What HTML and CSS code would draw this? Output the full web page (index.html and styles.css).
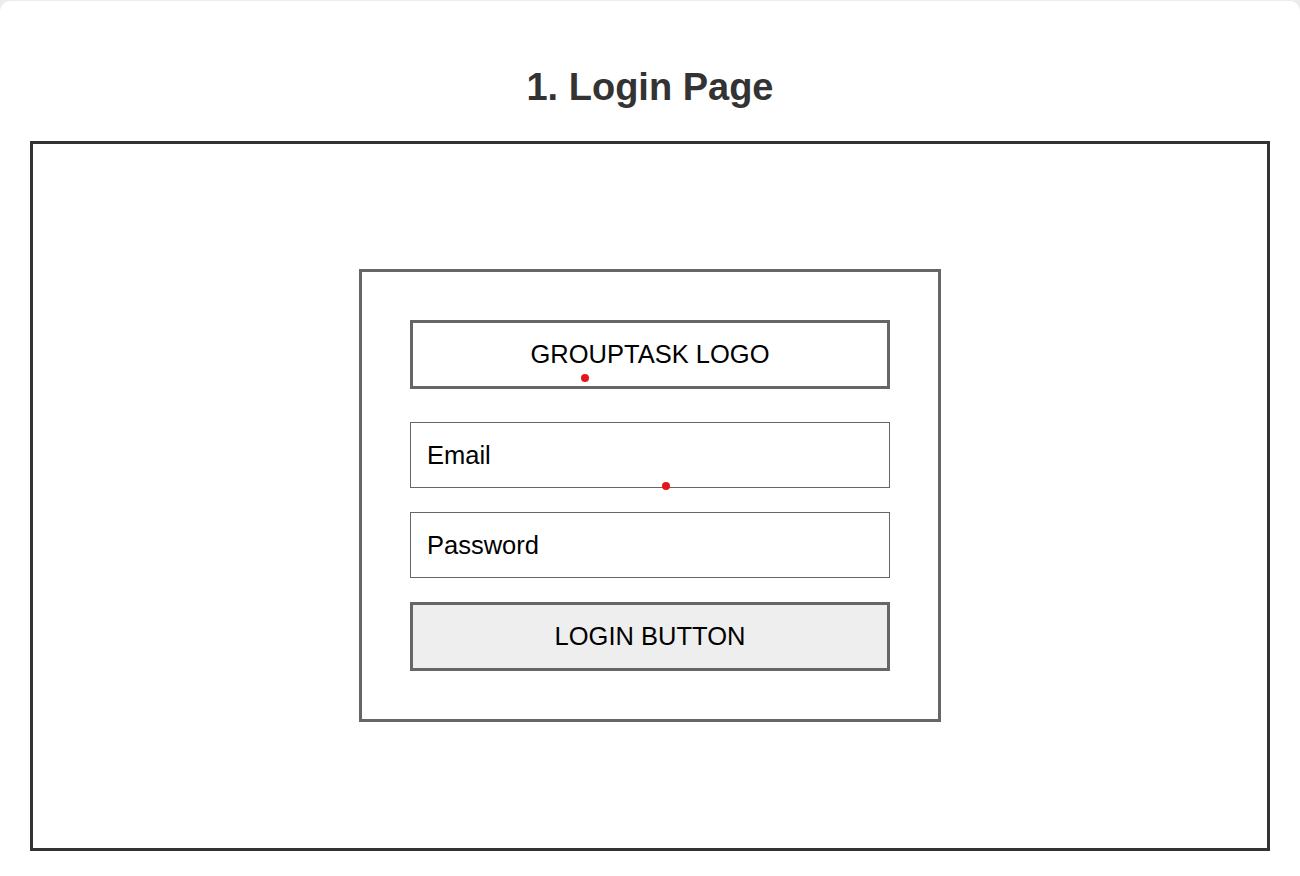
FILE: index.html
```html
<!DOCTYPE html>
<html lang="en">
<head>
<meta charset="utf-8">
<title>1. Login Page</title>
<link rel="stylesheet" href="styles.css">
</head>
<body>
<div class="page">
  <h2 class="title">1. Login Page</h2>
  <div class="frame">
    <div class="login-card">
      <div class="logo-box">GROUPTASK LOGO<span class="dot dot-logo"></span></div>
      <div class="field">Email<span class="dot dot-email"></span></div>
      <div class="field field-password">Password</div>
      <div class="login-btn">LOGIN BUTTON</div>
    </div>
  </div>
</div>
</body>
</html>
```

FILE: styles.css
```css
html {
  background: #ececec;
}
body {
  margin: 0;
  font-family: "Liberation Sans", Arial, sans-serif;
}
.page {
  margin-top: 1px;
  height: 875px;
  background: #ffffff;
  border-radius: 10px 10px 0 0;
  padding-top: 64px;
  box-sizing: border-box;
}
.title {
  margin: 0 0 32px;
  font-size: 38px;
  line-height: 44px;
  font-weight: bold;
  text-align: center;
  color: #333333;
}
.frame {
  margin: 0 30px;
  height: 710px;
  box-sizing: border-box;
  border: 3px solid #333333;
  padding-top: 125px;
  display: flex;
  align-items: flex-start;
  justify-content: center;
}
.login-card {
  width: 582px;
  box-sizing: border-box;
  border: 3px solid #666666;
  padding: 48px;
  display: flex;
  flex-direction: column;
}
.logo-box,
.login-btn {
  position: relative;
  height: 69px;
  box-sizing: border-box;
  border: 3px solid #666666;
  display: flex;
  align-items: center;
  justify-content: center;
  font-size: 25.5px;
  color: #000000;
}
.login-btn {
  margin-top: 24px;
  background: #eeeeee;
}
.field {
  position: relative;
  margin-top: 33px;
  height: 66px;
  box-sizing: border-box;
  border: 1px solid #666666;
  padding: 0 16px;
  display: flex;
  align-items: center;
  font-size: 25.5px;
  color: #000000;
}
.field-password {
  margin-top: 24px;
}
.dot {
  position: absolute;
  width: 8px;
  height: 8px;
  border-radius: 50%;
  background: #e8141c;
}
.dot-logo {
  left: 168px;
  top: 51px;
}
.dot-email {
  left: 251px;
  top: 59px;
}
```
